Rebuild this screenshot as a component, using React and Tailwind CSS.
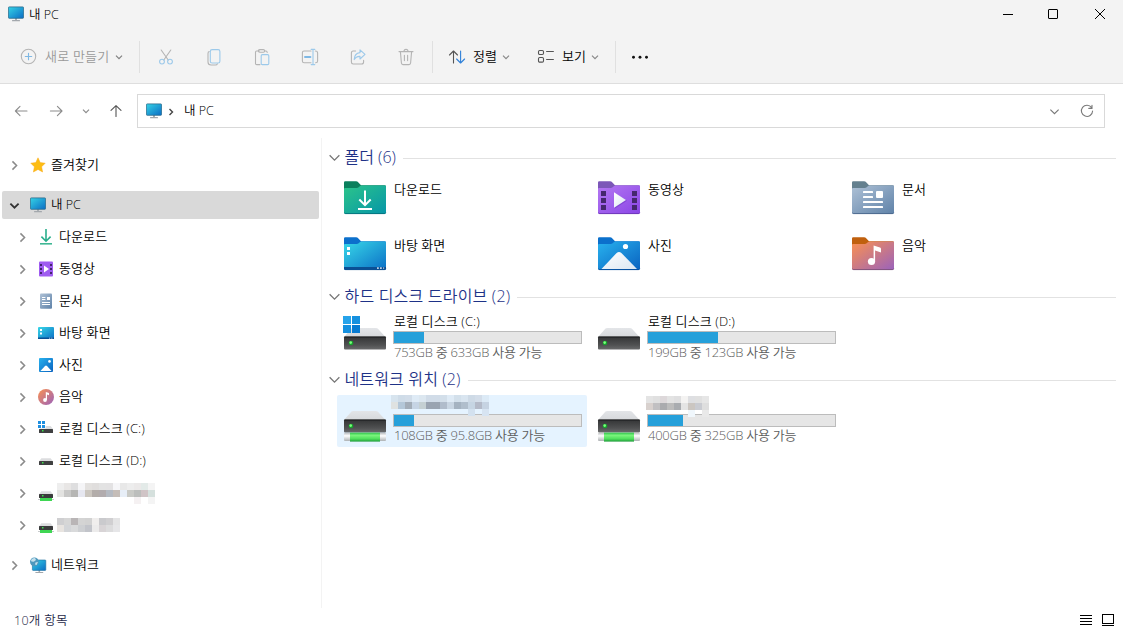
import React from "react";

const Monitor = ({ w = 16 }) => (
  <svg width={w} height={w} viewBox="0 0 16 16" className="shrink-0">
    <defs>
      <linearGradient id="mon" x1="0" y1="0" x2="1" y2="1">
        <stop offset="0" stopColor="#35d3e6" />
        <stop offset="1" stopColor="#0b6cc4" />
      </linearGradient>
    </defs>
    <rect x="7" y="12" width="2" height="3" fill="#a9aeb3" />
    <rect x="4" y="14" width="8" height="1.2" rx="0.5" fill="#a3a8ad" />
    <rect x="0.4" y="0.9" width="15.2" height="11.4" rx="0.8" fill="url(#mon)" stroke="#2c6b8c" strokeWidth="0.8" />
  </svg>
);

const Chevron = ({ dir = "down", s = 8, color = "#8a8a8a", sw = 1.2 }) => {
  const d = { down: "M1 2.6 L4 5.6 L7 2.6", right: "M2.5 1 L5.5 4 L2.5 7" }[dir];
  return (
    <svg width={s} height={s} viewBox="0 0 8 8" fill="none" stroke={color} strokeWidth={sw} className="shrink-0">
      <path d={d} />
    </svg>
  );
};

const Ico = ({ children, w = 20, color = "#b4b4b4" }) => (
  <svg width={w} height="20" viewBox={`0 0 ${w} 20`} fill="none" stroke={color} strokeWidth="1.1" strokeLinecap="round" strokeLinejoin="round" className="shrink-0">
    {children}
  </svg>
);

const BLUE = "#9cc9ea";

const folderColors = {
  down: ["#0a7f5c", "#2cc48a", "#0696a8", "#05707c"],
  video: ["#7c57b8", "#b478f2", "#8a45e6", "#6a35b4"],
  doc: ["#64808f", "#aec1d6", "#5f82a8", "#48658a"],
  desk: ["#0c70cc", "#38d8e8", "#0b6fc6", "#084a88"],
  photo: ["#0b70cc", "#28b2ee", "#0a62c0", "#084c98"],
  music: ["#c0600e", "#fb9150", "#9a62bc", "#7c5078"],
};

const Folder = ({ kind }) => {
  const [tab, a, b, edge] = folderColors[kind];
  return (
    <svg width="43" height="34" viewBox="0 0 43 34" className="shrink-0">
      <defs>
        <linearGradient id={"f" + kind} x1="0" y1="0" x2="1" y2="1">
          <stop offset="0" stopColor={a} />
          <stop offset="1" stopColor={b} />
        </linearGradient>
        <linearGradient id="paper" x1="0" y1="0" x2="1" y2="1">
          <stop offset="0" stopColor="#ffffff" />
          <stop offset="1" stopColor="#dbe6f2" />
        </linearGradient>
      </defs>
      <path d="M0 1.5 Q0 0.3 1.2 0.3 H12 Q13.4 0.3 14.4 1.4 L17 4.2 H40.5 Q42 4.2 42 5.5 V10 H0Z" fill={tab} />
      <path d="M0 7.6 Q0 7 1.2 7 H12.5 Q14 7 15 6 L16 5 Q16.6 4.5 18 4.5 H41 Q42 4.5 42 5.6 V31.6 Q42 33 40.6 33 H1.4 Q0 33 0 31.6Z" fill={`url(#f${kind})`} />
      <path d="M0.3 31.6 Q0.5 32.6 1.6 32.6 H40.4 Q41.5 32.6 41.7 31.6" fill="none" stroke={edge} strokeWidth="0.9" />
      {kind === "down" && (
        <g fill="none" stroke="#fff" strokeWidth="2">
          <path d="M21 9.5 V24 M15.3 18.5 L21 24.2 L26.7 18.5 M14 28 H28" />
        </g>
      )}
      {kind === "video" && (
        <g>
          {[10, 17, 24].map((y) => (
            <g key={y} fill="#45276e">
              <rect x="3" y={y} width="5" height="5" />
              <rect x="34" y={y} width="5" height="5" />
            </g>
          ))}
          <path d="M16 11.5 L28.3 19 L16 27Z" fill="#6a2fc0" opacity="0.5" transform="translate(.7 .8)" />
          <path d="M16 11.3 L28 19 L16 26.7Z" fill="url(#paper)" />
        </g>
      )}
      {kind === "doc" && (
        <g fill="#fff">
          <rect x="11" y="10" width="10" height="2" rx=".6" />
          <rect x="11" y="15" width="10" height="2" rx=".6" />
          <rect x="24" y="10" width="7" height="7" rx="1" />
          <rect x="11" y="20" width="20" height="2" rx=".6" />
          <rect x="11" y="25" width="20" height="2" rx=".6" />
        </g>
      )}
      {kind === "desk" && (
        <g fill="#fff">
          <path d="M0 30 H42 V31.6 Q42 33 40.6 33 H1.4 Q0 33 0 31.6Z" fill="#0a4f94" />
          <rect x="3" y="10" width="3" height="3" />
          <rect x="3" y="15" width="3" height="3" />
          <rect x="33" y="30.3" width="1.8" height="1.6" opacity=".8" />
          <rect x="36" y="30.3" width="1.8" height="1.6" opacity=".8" />
          <rect x="39" y="30.3" width="1.2" height="1.6" opacity=".6" />
        </g>
      )}
      {kind === "photo" && (
        <g>
          <path d="M3.5 32 L18.6 16 Q21 14 23.4 16 L39 32Z" fill="url(#paper)" />
          <circle cx="27.5" cy="9.5" r="2.6" fill="#fff" />
        </g>
      )}
      {kind === "music" && (
        <g fill="#fff">
          <circle cx="19.5" cy="24.5" r="3.6" />
          <path d="M21.6 8.6 L28 10.4 Q29 10.8 29 12 V15.4 L23.1 13.4 V24.5 H21.6Z" />
        </g>
      )}
    </svg>
  );
};

const Drive = ({ win, net }) => (
  <svg width="44" height="44" viewBox="0 0 44 44" className="shrink-0">
    <defs>
      <linearGradient id="dTop" x1="0" y1="0" x2="0" y2="1">
        <stop offset="0" stopColor="#e3e5e8" />
        <stop offset="1" stopColor="#d6d8db" />
      </linearGradient>
      <linearGradient id="dBody" x1="0" y1="0" x2="0" y2="1">
        <stop offset="0" stopColor="#333435" />
        <stop offset=".65" stopColor="#505152" />
        <stop offset="1" stopColor="#6a6b6c" />
      </linearGradient>
      <linearGradient id="pipe" x1="0" y1="0" x2="0" y2="1">
        <stop offset="0" stopColor="#2cc04a" />
        <stop offset=".3" stopColor="#7af57c" />
        <stop offset=".7" stopColor="#4ee05c" />
        <stop offset="1" stopColor="#1f9a3a" />
      </linearGradient>
      <linearGradient id="pipeEnd" x1="0" y1="0" x2="0" y2="1">
        <stop offset="0" stopColor="#bfc2c4" />
        <stop offset=".35" stopColor="#ffffff" />
        <stop offset="1" stopColor="#aeb2b4" />
      </linearGradient>
    </defs>
    <path d="M1 22 L8.5 13.6 Q9.2 13 10.2 13 H33 Q34 13 34.7 13.6 L42.5 22Z" fill="url(#dTop)" />
    <rect x="1" y="21.6" width="42" height="13" rx="1" fill="url(#dBody)" />
    <rect x="1.4" y="21.6" width="41.2" height="1.2" fill="#252627" />
    <circle cx="8" cy="28" r="2.3" fill="#17a32d" />
    <circle cx="7.7" cy="27.6" r="1.3" fill="#7dff7d" />
    {win && (
      <g fill="#1590df">
        <rect x="0" y="1" width="8" height="8" fill="#26a3ea" />
        <rect x="9" y="1" width="8" height="8" />
        <rect x="0" y="10" width="8" height="8" />
        <rect x="9" y="10" width="8" height="8" fill="#087bd2" />
      </g>
    )}
    {net && (
      <g>
        <rect x="1" y="35" width="42" height="8" rx="1" fill="url(#pipeEnd)" />
        <rect x="7" y="34.6" width="30" height="9" fill="url(#pipe)" />
      </g>
    )}
  </svg>
);

const SideIcon = ({ kind }) => {
  const body = {
    star: <path d="M8 0.8 L10.2 5.6 L15.2 6.2 L11.6 9.8 L12.6 15 L8 12.4 L3.4 15 L4.4 9.8 L0.8 6.2 L5.8 5.6Z" fill="#fdbd12" stroke="#f8a91b" strokeWidth=".5" />,
    down: <g fill="none" strokeWidth="1.6"><path d="M8 0 V12 M3.4 7.6 L8 12.2 L12.6 7.6" stroke="#2aae8c" /><path d="M2 14.8 H14" stroke="#3fb795" /></g>,
    video: (
      <g>
        <rect x="1" y="0.5" width="14" height="15" rx="1" fill="#9f5cf0" />
        {[3, 7, 11].map((y) => <g key={y} fill="#43256e"><rect x="2" y={y} width="2" height="2" /><rect x="12" y={y} width="2" height="2" /></g>)}
        <path d="M6 4.5 L11 8 L6 11.5Z" fill="#fff" />
      </g>
    ),
    doc: (
      <g>
        <rect x="2" y="0.5" width="12" height="15.2" rx="1" fill="url(#fdoc)" />
        <path d="M4 4.5 H7.4 M4 6.5 H7.4 M4 9.5 H12 M4 11.5 H12" stroke="#fff" strokeWidth="1" />
        <rect x="9" y="4" width="3" height="3" fill="#fff" />
      </g>
    ),
    desk: (
      <g>
        <rect x="0" y="2" width="16" height="12" rx="1" fill="url(#fdesk)" />
        <rect x="0" y="12.5" width="16" height="1.5" fill="#0a4f94" />
        <rect x="2" y="4" width="2" height="2" fill="#fff" />
        <rect x="2" y="7.5" width="2" height="2" fill="#fff" />
        <path d="M11 13.2 H15" stroke="#cfe6fa" strokeWidth=".8" strokeDasharray="1 .8" />
      </g>
    ),
    photo: (
      <g>
        <rect x="1" y="1" width="14" height="14" rx="1" fill="url(#fphoto)" />
        <path d="M2.4 14 L7 9 Q8 8 9 9 L13.6 14Z" fill="#fff" />
        <circle cx="11.5" cy="4.4" r="1.3" fill="#fff" />
      </g>
    ),
    music: (
      <g>
        <circle cx="8" cy="8" r="8" fill="url(#fmusic)" />
        <circle cx="7" cy="11" r="1.9" fill="#fff" />
        <path d="M7.8 3 L11 4 V6.2 L9 5.6 V11 H7.8Z" fill="#fff" />
      </g>
    ),
    diskc: (
      <g>
        <g fill="#1f8fe0"><rect x="0" y="0" width="3" height="3" /><rect x="4" y="0" width="3" height="3" /><rect x="0" y="4" width="3" height="3" /><rect x="4" y="4" width="3" height="3" /></g>
        <path d="M7.6 5 H12.6 L15 8 H1.6 L2.5 7.4 H7.6Z" fill="#dcdddf" />
        <rect x="1" y="8" width="14" height="4" rx=".5" fill="#3f4041" />
        <rect x="4" y="9" width="1.5" height="1.5" fill="#3fe04e" />
      </g>
    ),
    diskd: (
      <g>
        <path d="M3.4 5.2 H12.6 L15 8.2 H1Z" fill="#dcdddf" />
        <rect x="1" y="8" width="14" height="4" rx=".5" fill="#3f4041" />
        <rect x="4" y="9" width="1.5" height="1.5" fill="#3fe04e" />
      </g>
    ),
    net: (
      <g transform="translate(0 1)">
        <path d="M3.4 5.2 H12.6 L15 8.2 H1Z" fill="#dcdddf" />
        <rect x="1" y="8" width="14" height="4" rx=".5" fill="#3a3b3c" />
        <rect x="4" y="9" width="1.5" height="1.5" fill="#3fe04e" />
        <rect x="0" y="13" width="16" height="1" fill="#c8cbcc" />
        <rect x="2" y="12" width="12" height="3" fill="#3fd653" />
      </g>
    ),
    network: (
      <g>
        <rect x="8.5" y="13" width="1.6" height="2" fill="#a9aeb3" />
        <rect x="5.4" y="15" width="7.8" height="1" fill="#a3a8ad" />
        <rect x="2.4" y="3" width="13.4" height="10.4" rx=".7" fill="url(#mon)" stroke="#1c6d9c" strokeWidth=".6" />
        <circle cx="4.4" cy="4.8" r="4.4" fill="#4d98bd" />
        <path d="M1 3 Q3 0.6 5.2 1.2 L6 3 L3.8 4.8 L1.4 4.6Z M5.5 5.5 L8 5 L6.6 8 L5 7.6Z" fill="#c3e0ec" />
      </g>
    ),
    pc: null,
  }[kind];
  if (kind === "pc") return <Monitor />;
  return <svg width="16" height="16" viewBox="0 0 16 16" className="shrink-0 overflow-visible">{body}</svg>;
};

const Mosaic = ({ rows }) => (
  <div className="flex flex-col">
    {rows.map((r, i) => (
      <div key={i} className="flex h-[7px]">
        {r.split(" ").map((c, j) => (
          <span key={j} className="h-[7px] w-[7px]" style={{ background: c === "-" ? "transparent" : "#" + c }} />
        ))}
      </div>
    ))}
  </div>
);

const sideA = [
  "eeeeee e8e6e5 dededf f5f5f7 e3e1df e0dedd e3e3e3 e3e2e3 f6f6f8 e8e8e8 ededed ebe9e9 e3eae8 f4f4f4",
  "e3e3e1 c8c8c7 b6b6b4 e6e7f0 cbc6bf b3adaa b2acae b5bac2 c5bdb8 e7eef7 c9cac6 bcbebc d0c4c6 d5e0dd",
  "- - - - - - - - - - - f5f1f2 - f4f4f4",
];
const sideB = [
  "cfcfd1 d6d6d6 b9b5b6 d4d4d4 d2d2d2 f0eeed cacacd d0cfd1 e4e4e5",
  "e8e4e0 d3d5d8 d9dadb cdcfd2 c2c4ca ecebeb d8d4d6 dcdcdd e6e6e8",
];
const mainA = [
  "d7e4ee cfdce8 d2dde9 dfebf6 dce7f0 d1dce8 d1dce8 d3dfea dfebf6 d3e0eb d9e5f0 cedae6 d3dde9 dceaf6",
  "dfe2e1 b4c7d8 a3adb8 c6d4e4 c5d0d3 9aa4b1 9aa4b1 b0bccb c9d6e3 a5b3c1 b0becc c6d5e3 b4bac8 c6d3e2",
  "- - - - - - - - - - - d3e1ef - d7e4f2",
];
const mainB = [
  "e4e4e4 e0e0e0 ddd8da e3e3e3 dfdfe0 f4f3f2 dedfe2 e0e0e0 e6e6e6",
  "d8d1ce c1c0c2 aaabae bcbcbc a9acb0 e4e4e4 cbc6c1 c9cbd1 dedede",
  "- - - - - - f0f7fc - e9e9e9",
];

const items = [
  ["down", "다운로드"], ["video", "동영상"], ["doc", "문서"], ["desk", "바탕 화면"], ["photo", "사진"],
  ["music", "음악"], ["diskc", "로컬 디스크 (C:)"], ["diskd", "로컬 디스크 (D:)"], ["net", null, sideA], ["net", null, sideB],
];

const Section = ({ title, tracking = "" }) => (
  <div className="flex h-6 items-center">
    <Chevron s={13} sw={0.8} color="#777" />
    <h2 className={"ml-[3.5px] shrink-0 whitespace-pre text-[16px] leading-6 text-[#1e3287] " + tracking}>{title}</h2>
    <div className="ml-[7px] mt-[2px] h-px flex-1 bg-[#e2e2e2]" />
  </div>
);

const DriveTile = ({ name, mosaic, fill, info, win, net, selected }) => (
  <div className={"mr-1 flex h-[52px] w-[250px] rounded-[2px] pl-[6px] " + (selected ? "bg-[#e5f3ff]" : "")}>
    <div className="pt-[3px]"><Drive win={win} net={net} /></div>
    <div className="ml-[6px] w-[189px]">
      <div className="h-[19px]">
        {mosaic ? <div className={selected ? "-ml-[2px]" : "-ml-px pt-px"}><Mosaic rows={mosaic} /></div> : <p className="ml-px whitespace-pre pt-px text-[13px] leading-[17px] tracking-[0.1px]">{name}</p>}
      </div>
      <div className="h-[13px] border border-[#bcbcbc] bg-[#e6e6e6]">
        <div className="h-full bg-[#26a0da]" style={{ width: fill }} />
      </div>
      <p className="ml-px whitespace-pre text-[13px] leading-[17px] tracking-[-0.25px] text-[#5c5c5c]">{info}</p>
    </div>
  </div>
);

export default function App() {
  return (
    <div className="flex h-[632px] w-[1123px] flex-col overflow-hidden bg-white font-['Open_Sans','Noto_Sans_CJK_KR',sans-serif] text-[13px] font-[350] text-black">
      <header className="flex h-[84px] flex-col border-b border-[#dedede] bg-[#f3f3f3]">
        <div className="flex h-[29px] items-center">
          <div className="ml-2 flex flex-1 items-center gap-[5px]">
            <Monitor />
            <span className="pt-[2px] text-[12.5px]">내 PC</span>
          </div>
          <div className="flex items-center pr-px">
            <div className="flex w-[45px] pl-[16px]"><div className="h-px w-[10px] bg-black" /></div>
            <div className="flex w-[45px] pl-[16px]"><div className="h-[10px] w-[10px] rounded-[1px] border border-black" /></div>
            <div className="flex w-[45px] justify-center">
              <svg width="12" height="12" viewBox="0 0 12 12" stroke="#000" strokeWidth="1"><path d="M1 1 L11 11 M11 1 L1 11" /></svg>
            </div>
          </div>
        </div>
        <div className="flex h-[55px] items-center pl-[18px] pt-[2px] text-[#999]">
          <Ico><circle cx="10.5" cy="9.5" r="7.2" /><path d="M10.5 6.3 V12.7 M7.3 9.5 H13.7" stroke="#7fb8e4" /></Ico>
          <span className="ml-[7px] w-[66px] whitespace-pre tracking-[0.2px]">새로 만들기</span>
          <span className="ml-1 mt-px flex"><Chevron color="#808080" /></span>
          <div className="ml-4 mr-4 h-8 w-px bg-[#e0e0e0]" />
          <div className="flex gap-7">
            <Ico>
              <path d="M5.2 3 L12.2 13 M14.8 3 L7.8 13" />
              <circle cx="6" cy="14.6" r="2.4" stroke={BLUE} /><circle cx="14" cy="14.6" r="2.4" stroke={BLUE} />
            </Ico>
            <Ico>
              <path d="M5.2 4.6 Q4 5 4 6.5 V15 Q4 18 7 18 H11.5 Q13 18 13.4 16.8" />
              <rect x="6.3" y="2.6" width="9.6" height="13.4" rx="1.8" stroke={BLUE} />
            </Ico>
            <Ico>
              <path d="M7.5 4 H4.6 Q3.5 4 3.5 5.2 V16.4 Q3.5 17.6 4.7 17.6 H8 M12.5 4 H14 Q15 4 15.2 5.4" />
              <rect x="6.4" y="2.6" width="6.2" height="2.6" rx="1.2" />
              <rect x="9.2" y="7.6" width="7.6" height="10" rx="1.2" stroke={BLUE} />
            </Ico>
            <Ico>
              <path d="M11 4 H4 Q2.4 4 2.4 5.6 V14 Q2.4 15.8 4.2 15.8 H11 M15.4 4 Q17.6 4 17.6 6 V14 Q17.6 15.8 15.6 15.8" />
              <path d="M13 2.4 V17.6 M11.2 2.4 H14.8 M11.2 17.6 H14.8" stroke={BLUE} />
              <path d="M5 10 H10.4" stroke="#7fb8e4" strokeWidth="2" />
            </Ico>
            <Ico>
              <path d="M7.6 4 H5.2 Q3.4 4 3.4 6 V15 Q3.4 17 5.2 17 H13.6 Q15.6 17 15.6 15 V13.4" />
              <path d="M12 2.8 L17 7.4 L12 12 V9.4 Q8 9.2 6.2 12.6 Q6.4 6.2 12 5.6Z" stroke={BLUE} />
            </Ico>
            <Ico>
              <path d="M3 4.6 H17 M4.4 4.6 L5.4 16 Q5.6 17.6 7 17.6 H13 Q14.4 17.6 14.6 16 L15.6 4.6 M8 4.4 Q8 2.4 10 2.4 Q12 2.4 12 4.4 M8.4 8.2 V13.6 M11.6 8.2 V13.6" />
            </Ico>
          </div>
          <div className="ml-4 mr-[14px] h-8 w-px bg-[#e0e0e0]" />
          <Ico color="#555"><path d="M6.5 4 V16 M2.5 8 L6.5 4 L10.5 8" /><path d="M13.6 4 V16 M9.6 12 L13.6 16 L17.6 12" stroke="#2f80d8" /></Ico>
          <span className="ml-[6px] w-[25px] text-black">정렬</span>
          <span className="ml-[4px] mt-px flex"><Chevron color="#888" /></span>
          <span className="ml-[26px] flex">
            <Ico color="#555"><rect x="2.5" y="3.5" width="5" height="4" rx="1.2" /><rect x="2.5" y="10.5" width="5" height="4.6" rx="1.2" /><path d="M10.6 4.5 H17.4 M10.6 12.5 H17.4" /></Ico>
          </span>
          <span className="ml-[6px] w-[25px] text-black">보기</span>
          <span className="ml-[4px] mt-px flex"><Chevron color="#888" /></span>
          <div className="ml-4 mr-[14px] h-8 w-px bg-[#e0e0e0]" />
          <svg width="20" height="4" viewBox="0 0 20 4"><g fill="#111"><circle cx="3.5" cy="2.2" r="1.45" /><circle cx="10" cy="2.2" r="1.45" /><circle cx="16.5" cy="2.2" r="1.45" /></g></svg>
        </div>
      </header>

      <nav className="flex h-[54px] items-center">
        <div className="flex w-[137px] items-center pl-[11px]">
          <Ico color="#8c8c8c"><path d="M4.4 10 H16 M9 5.4 L4.4 10 L9 14.6" /></Ico>
          <span className="ml-[15px] flex"><Ico color="#8c8c8c"><path d="M4.4 10 H16 M11.4 5.4 L16 10 L11.4 14.6" /></Ico></span>
          <span className="ml-4 flex"><Chevron color="#8c8c8c" /></span>
          <span className="ml-[15.5px] flex"><Ico color="#555"><path d="M10 4.6 V15.4 M5 9.4 L10 4.6 L15 9.4" /></Ico></span>
        </div>
        <div className="flex h-[34px] w-[968px] items-center border border-[#d9d9d9] pl-2">
          <Monitor />
          <span className="ml-[5px] mt-px flex"><Chevron dir="right" color="#444" sw={1.4} /></span>
          <span className="ml-[9px] flex-1 text-[12.5px]">내 PC</span>
          <Chevron s={11} color="#777" sw={0.8} />
          <span className="ml-[17px] mr-[7px] flex">
            <Ico color="#7a7a7a"><path d="M14.6 6.6 A5.6 5.6 0 1 0 15.6 10 M15 4.2 V7.4 H11.8" /></Ico>
          </span>
        </div>
      </nav>

      <div className="flex h-[470px]">
        <aside className="flex w-[322px] flex-col border-r border-[#f3f3f3] pt-[11px]">
          <div className="flex h-8 items-center pl-[9px]">
            <Chevron dir="right" s={11} sw={1.1} />
            <span className="ml-[10px] flex"><SideIcon kind="star" /></span>
            <span className="ml-[5px]">즐겨찾기</span>
          </div>
          <div className="ml-[2px] mt-[10px] flex h-7 w-[317px] items-center rounded-[2px] bg-[#d9d9d9] pl-[7px]">
            <Chevron s={11} color="#333" sw={1.3} />
            <span className="ml-[10px] flex"><SideIcon kind="pc" /></span>
            <span className="ml-[5px] text-[12.5px]">내 PC</span>
          </div>
          <div className="mt-[2px]">
            {items.map(([kind, label, mosaic], i) => (
              <div key={i} className="flex h-8 items-center pl-[17px]">
                <Chevron dir="right" s={11} sw={1.1} />
                <span className="ml-[10px] flex"><SideIcon kind={kind} /></span>
                {label ? <span className="ml-[5px] whitespace-pre pb-px tracking-[0.1px]">{label}</span> : <span className="ml-[3px]"><Mosaic rows={mosaic} /></span>}
              </div>
            ))}
          </div>
          <div className="mt-[8px] flex h-8 items-center pl-[9px]">
            <Chevron dir="right" s={11} sw={1.1} />
            <span className="ml-[10px] flex"><SideIcon kind="network" /></span>
            <span className="ml-[5px]">네트워크</span>
          </div>
        </aside>

        <main className="flex-1 pl-[6px] pr-[7px] pt-[7px]">
          <Section title="폴더 (6)" />
          <div className="ml-[16px] mt-3 grid grid-cols-[254px_254px_254px] gap-y-[22px]">
            {[["down", "다운로드"], ["video", "동영상"], ["doc", "문서"], ["desk", "바탕 화면"], ["photo", "사진"], ["music", "음악"]].map(([k, t]) => (
              <div key={k} className="flex h-[34px]">
                <Folder kind={k} />
                <span className="ml-[7px] whitespace-pre leading-[17px]">{t}</span>
              </div>
            ))}
          </div>
          <div className="mt-[13px]"><Section title="하드 디스크 드라이브 (2)" tracking="tracking-[0.2px]" /></div>
          <div className="ml-[9px] mt-1 flex">
            <DriveTile win name="로컬 디스크 (C:)" fill="30px" info="753GB 중 633GB 사용 가능" />
            <DriveTile name="로컬 디스크 (D:)" fill="70px" info="199GB 중 123GB 사용 가능" />
          </div>
          <div className="mt-[3px]"><Section title="네트워크 위치 (2)" tracking="tracking-[0.15px]" /></div>
          <div className="ml-[9px] mt-1 flex">
            <DriveTile net selected mosaic={mainA} fill="20px" info="108GB 중 95.8GB 사용 가능" />
            <DriveTile net mosaic={mainB} fill="35px" info="400GB 중 325GB 사용 가능" />
          </div>
        </main>
      </div>

      <footer className="flex h-6 items-center pl-[14px] pr-2">
        <span className="flex-1 pt-[2px] text-[12.5px] tracking-[0.3px] text-[#1f2848]">10개 항목</span>
        <svg width="36" height="14" viewBox="0 0 36 14" fill="none" stroke="#000" shapeRendering="crispEdges">
          <path d="M1 2.5 H13 M1 5.5 H13 M1 8.5 H13 M1 11.5 H13 M23 12.5 H35" />
          <rect x="23.5" y="1.5" width="11" height="9" />
        </svg>
      </footer>
    </div>
  );
}
